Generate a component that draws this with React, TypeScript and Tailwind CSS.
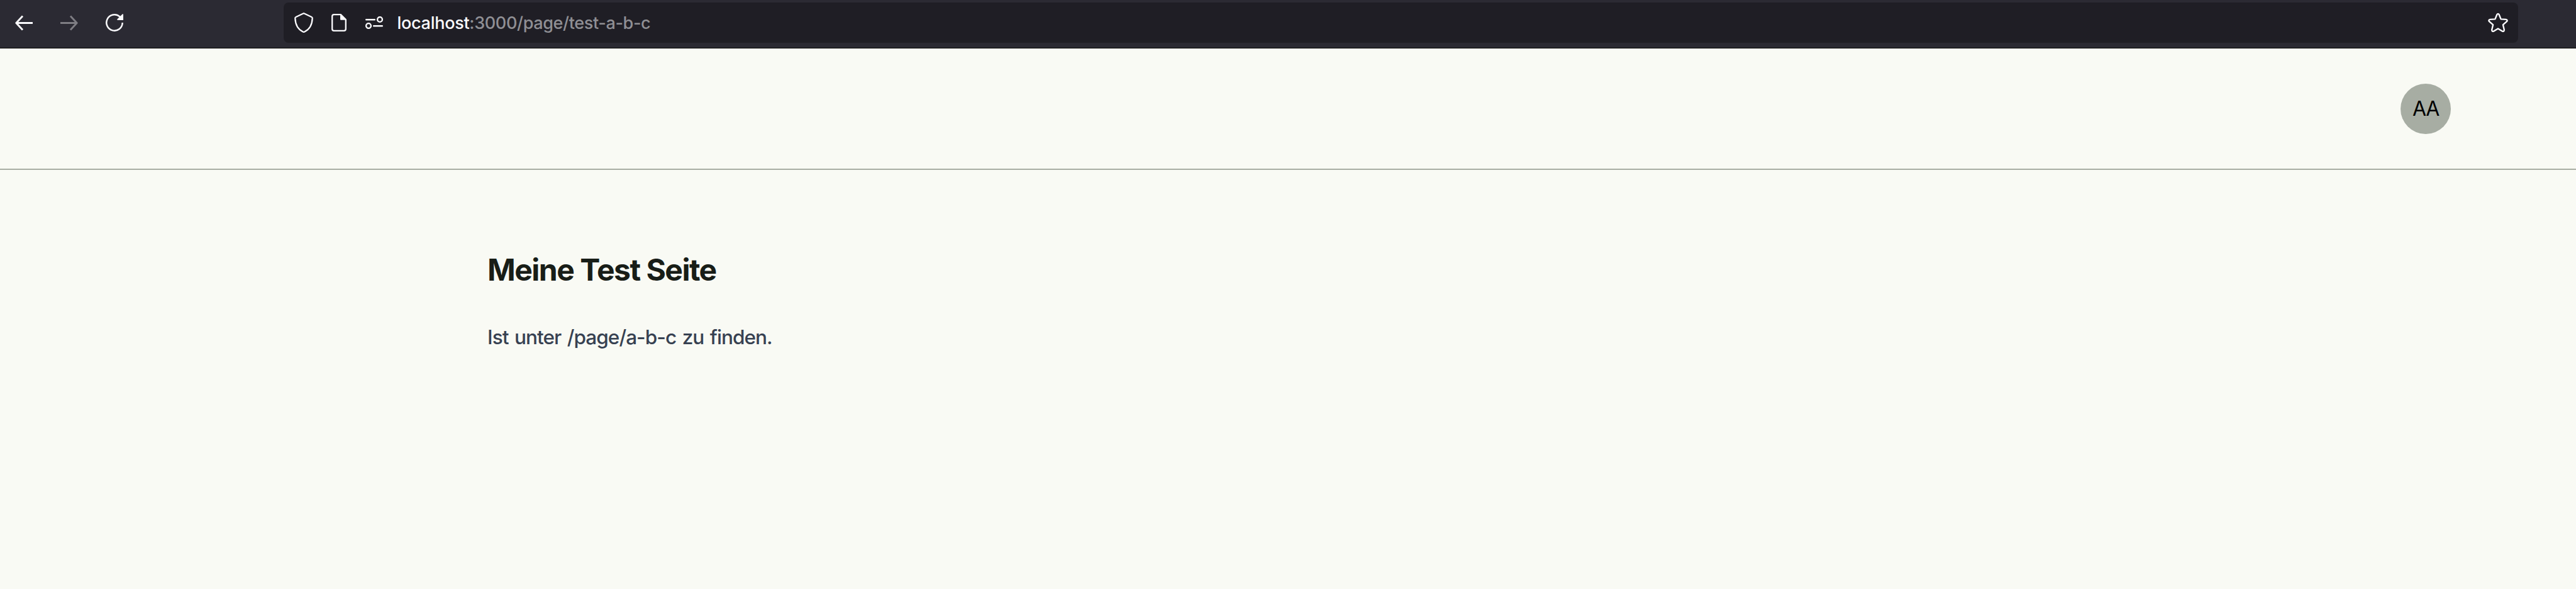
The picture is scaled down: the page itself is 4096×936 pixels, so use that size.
function BrowserBar() {
  return (
    <div className="flex h-[77px] items-start border-b border-black bg-[#2b2a33] pt-1 pl-6">
      <div className="flex h-16 w-[427px] items-center gap-11 text-[#fbfbfe]">
        <svg className="h-7 w-7" viewBox="0 0 28 28" fill="none" stroke="currentColor" strokeWidth="2.9">
          <path d="M28 14.5H2M12 3.5L1.8 14.5L12 25.5" strokeLinejoin="round" />
        </svg>
        <svg className="h-7 w-7 text-[#7e7d83]" viewBox="0 0 28 28" fill="none" stroke="currentColor" strokeWidth="2.9">
          <path d="M0 14.5H26M16 3.5L26.2 14.5L16 25.5" strokeLinejoin="round" />
        </svg>
        <svg className="h-7 w-7" viewBox="0 0 28 28" fill="none" stroke="currentColor" strokeWidth="2.5">
          <path d="M26.7 14A12.7 12.7 0 1 1 22.3 4.4L24 6" />
          <path d="M28 .8V10H19Q17.6 9.2 18.6 8.2L26.6 .4Q27.6 -.2 28 .8Z" fill="currentColor" stroke="none" />
        </svg>
      </div>
      <div className="flex h-16 w-[3553px] items-center rounded-lg bg-[#1f1e25] pr-4 pl-[17px] text-[#fbfbfe]">
        <svg className="h-8 w-[30px]" viewBox="0 0 30 32" fill="none" stroke="currentColor" strokeWidth="2.3" strokeLinejoin="round">
          <path d="M14.1 1.5Q15 1 15.9 1.5L27.4 7Q28.8 7.6 28.7 9C28.3 19.5 23.5 27 16.3 30.5Q15 31.2 13.7 30.5C6.5 27 1.7 19.5 1.3 9Q1.2 7.6 2.6 7Z" />
        </svg>
        <svg className="ml-[29px] h-7 w-6" viewBox="0 0 24 28" fill="none" stroke="currentColor" strokeWidth="2.3" strokeLinejoin="round">
          <path d="M4 1.2H15L22.8 9V24Q22.8 26.8 20 26.8H4Q1.2 26.8 1.2 24V4Q1.2 1.2 4 1.2Z" />
          <path d="M14.5 1.2V9.2H22.8Z" fill="currentColor" strokeWidth="1" />
        </svg>
        <svg className="ml-[30px] h-5 w-7" viewBox="0 0 28 20" fill="none" stroke="currentColor" strokeWidth="2.4" strokeLinecap="round">
          <path d="M1.2 5.2H14.8M13.2 15.2H26.8" />
          <circle cx="23" cy="5" r="3.9" />
          <circle cx="5" cy="15" r="3.9" />
        </svg>
        <p className="ml-[22.5px] flex-1 pt-0.5 font-['Inter',sans-serif] text-[27px] leading-8 font-[450] tracking-[-0.35px] text-[#8f8f94]">
          <span className="font-medium tracking-[-0.28px] text-[#fbfbfe]">localhost</span>:3000/page/test-a-b-c
        </p>
        <svg className="h-8 w-8" viewBox="0 0 32 32" fill="none" stroke="currentColor" strokeWidth="2.4" strokeLinejoin="round">
          <path d="M14.3 3.2Q16 .6 17.7 3.2L20.6 10.4L28.6 10.9Q31.8 11.6 29.9 14.2L23.9 19.3L25.8 27.3Q25.9 30.7 22.7 29.6L16 25.5L9.3 29.6Q6.1 30.7 6.2 27.3L8.1 19.3L2.1 14.2Q.2 11.6 3.4 10.9L11.4 10.4Z" />
        </svg>
      </div>
    </div>
  );
}

export default function App() {
  return (
    <div className="h-[936px] w-[4096px] overflow-hidden bg-[#f9faf4] font-['Inter',sans-serif]">
      <BrowserBar />
      <header className="flex h-[193px] items-start justify-end border-b-2 border-[#a8ada3] pt-14 pr-[199px]">
        <div className="flex h-20 w-20 items-center justify-center rounded-full bg-[#a7ada3] text-[32px] leading-none tracking-[-1.4px] text-black">
          AA
        </div>
      </header>
      <main className="pt-[131px] pl-[775px]">
        <h1 className="text-[48px] leading-[56px] font-bold tracking-[-1.5px] text-[#181d17]">Meine Test Seite</h1>
        <p className="mt-[55px] text-[31.5px] leading-[48px] font-[450] tracking-[-0.93px] text-[#374151] [word-spacing:2px]">
          Ist unter /page/a-b-c zu finden.
        </p>
      </main>
    </div>
  );
}
